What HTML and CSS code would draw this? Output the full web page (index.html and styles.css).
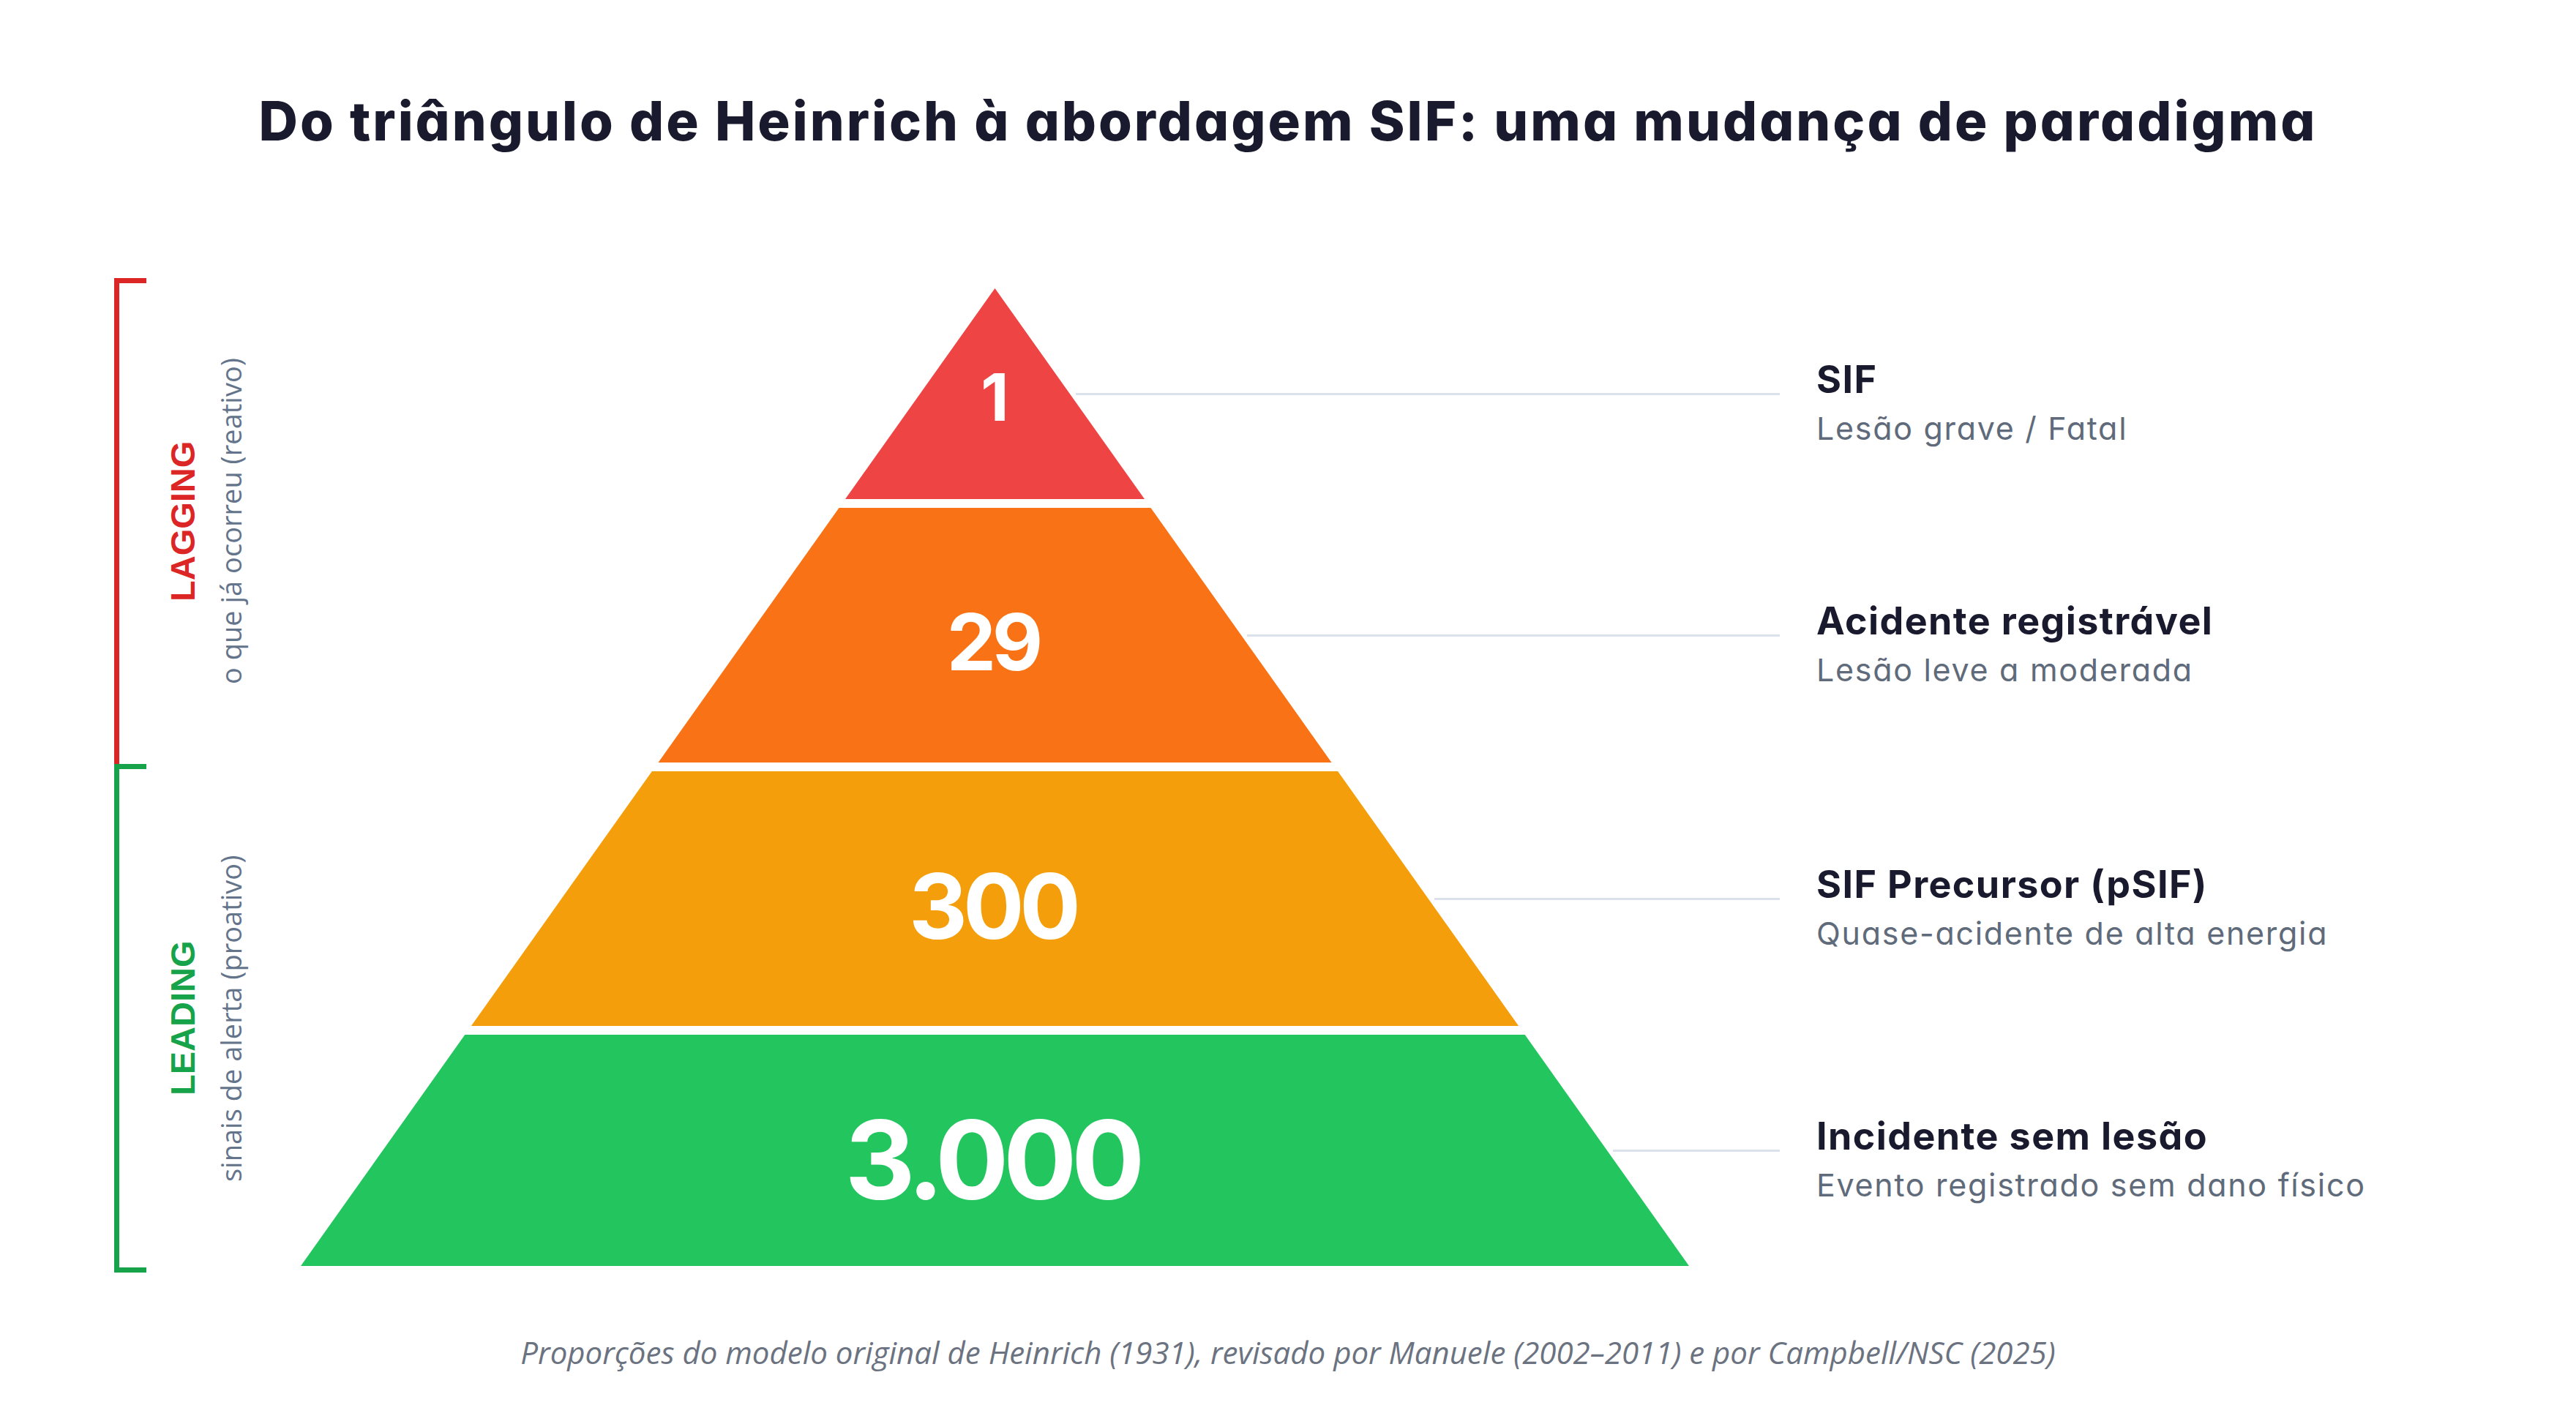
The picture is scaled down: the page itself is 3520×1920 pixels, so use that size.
FILE: index.html
```html
<!DOCTYPE html>
<html lang="pt-BR">
<head>
<meta charset="utf-8">
<title>Do triângulo de Heinrich à abordagem SIF</title>
<link rel="stylesheet" href="styles.css">
</head>
<body>
<main class="page">
  <h1 class="title">Do triângulo de Heinrich à abordagem SIF: uma mudança de paradigma</h1>

  <section class="chart">
    <div class="axis">
      <div class="group group-lag">
        <div class="bracket bracket-lag"></div>
        <div class="axis-text">
          <div class="axis-title lag">LAGGING</div>
          <div class="axis-sub">o que já ocorreu (reativo)</div>
        </div>
      </div>
      <div class="group group-lead">
        <div class="bracket bracket-lead"></div>
        <div class="axis-text">
          <div class="axis-title lead">LEADING</div>
          <div class="axis-sub">sinais de alerta (proativo)</div>
        </div>
      </div>
    </div>

    <div class="pyramid">
      <div class="tier tier-1">
        <div class="band"><span class="num">1</span></div>
        <div class="leader"></div>
        <div class="label">
          <div class="label-title">SIF</div>
          <div class="label-sub">Lesão grave / Fatal</div>
        </div>
      </div>
      <div class="tier tier-2">
        <div class="band"><span class="num">29</span></div>
        <div class="leader"></div>
        <div class="label">
          <div class="label-title">Acidente registrável</div>
          <div class="label-sub">Lesão leve a moderada</div>
        </div>
      </div>
      <div class="tier tier-3">
        <div class="band"><span class="num">300</span></div>
        <div class="leader"></div>
        <div class="label">
          <div class="label-title">SIF Precursor (pSIF)</div>
          <div class="label-sub">Quase-acidente de alta energia</div>
        </div>
      </div>
      <div class="tier tier-4">
        <div class="band"><span class="num">3.000</span></div>
        <div class="leader"></div>
        <div class="label">
          <div class="label-title">Incidente sem lesão</div>
          <div class="label-sub">Evento registrado sem dano físico</div>
        </div>
      </div>
    </div>
  </section>

  <p class="footer">Proporções do modelo original de Heinrich (1931), revisado por Manuele (2002–2011) e por Campbell/NSC (2025)</p>
</main>
</body>
</html>
```

FILE: styles.css
```css
* { box-sizing: border-box; }

html, body {
  margin: 0;
  padding: 0;
  background: #ffffff;
}

body {
  width: 3520px;
  height: 1920px;
  overflow: hidden;
  font-family: "Inter", "Noto Sans", sans-serif;
  font-feature-settings: "cv11" 1;
  color: #1a1a2e;
}

.page {
  display: flex;
  flex-direction: column;
  width: 3520px;
  height: 1920px;
}

.title {
  margin: 0;
  padding-top: 128px;
  font-size: 74px;
  line-height: 74px;
  font-weight: 800;
  text-align: center;
  color: #1a1a2e;
  letter-spacing: 3px;
}

.chart {
  display: flex;
  align-items: flex-start;
  margin-top: 178px;
}

/* ---------- left axis ---------- */
.axis {
  width: 411px;
  flex: none;
  padding-left: 156px;
  display: flex;
  flex-direction: column;
}

.group {
  display: flex;
}

.group-lag { height: 664px; }
.group-lead { height: 695px; }

.bracket {
  width: 44px;
  flex: none;
  height: 100%;
  border-left: 7px solid;
  border-top: 7px solid;
}

.bracket-lag { border-color: #dc2626; }

.bracket-lead {
  border-color: #16a34a;
  border-bottom: 7px solid #16a34a;
}

.axis-text {
  margin-left: 22px;
  height: 100%;
  writing-mode: vertical-rl;
  transform: rotate(180deg);
  text-align: center;
  display: flex;
  flex-direction: column;
  justify-content: center;
}

.axis-title {
  font-family: "Liberation Sans", Arial, sans-serif;
  font-weight: 700;
  font-size: 47px;
  line-height: 56px;
}

.axis-title.lag { color: #dc2626; }
.axis-title.lead { color: #16a34a; }

.axis-sub {
  font-family: "Open Sans", "Noto Sans", sans-serif;
  font-size: 38px;
  line-height: 74px;
  color: #64748b;
}

/* ---------- pyramid ---------- */
.pyramid {
  margin-top: 14px;
  display: flex;
  flex-direction: column;
  gap: 12px;
}

.tier {
  display: flex;
  align-items: center;
}

.band {
  width: 1897px;
  flex: none;
  display: flex;
  align-items: center;
  justify-content: center;
}

.num {
  color: #ffffff;
  font-weight: 700;
  line-height: 1;
  letter-spacing: -0.05em;
  margin-right: 0.05em;
}

.leader {
  flex: none;
  height: 3px;
  background: #dbe2ec;
}

.label {
  margin-left: 50px;
  padding-top: 24px;
  white-space: nowrap;
}

.label-title {
  font-size: 52px;
  line-height: 52px;
  font-weight: 700;
  letter-spacing: 1.4px;
  color: #1a1a2e;
}

.label-sub {
  margin-top: 19px;
  font-size: 43px;
  line-height: 43px;
  font-weight: 400;
  letter-spacing: 1.7px;
  color: #5f6b7a;
}

.tier-1 .band {
  height: 288px;
  background: #ef4444;
  clip-path: polygon(948.5px 0, 1153px 100%, 744px 100%);
}
.tier-1 .num { font-size: 89px; padding-top: 9px; }
.tier-1 .leader { margin-left: -838px; width: 962px; }

.tier-2 .band {
  height: 348px;
  background: #f97316;
  clip-path: polygon(735.5px 0, 1161.5px 0, 1408.5px 100%, 488.5px 100%);
}
.tier-2 .num { font-size: 107px; padding-top: 18px; }
.tier-2 .leader { margin-left: -604px; width: 728px; }

.tier-3 .band {
  height: 348px;
  background: #f59e0b;
  clip-path: polygon(479.9px 0, 1417.1px 0, 1664.1px 100%, 232.9px 100%);
}
.tier-3 .num { font-size: 124px; padding-top: 19px; }
.tier-3 .leader { margin-left: -348px; width: 472px; }

.tier-4 .band {
  height: 316px;
  background: #22c55e;
  clip-path: polygon(224.3px 0, 1672.7px 0, 100% 100%, 0 100%);
}
.tier-4 .num { font-size: 149px; padding-top: 26px; }
.tier-4 .leader { margin-left: -104px; width: 228px; }

/* ---------- footer ---------- */
.footer {
  margin: 88px 0 0 0;
  font-family: "Open Sans", "Noto Sans", sans-serif;
  font-style: italic;
  font-size: 42px;
  line-height: 42px;
  text-align: center;
  color: #6b7280;
}
```
